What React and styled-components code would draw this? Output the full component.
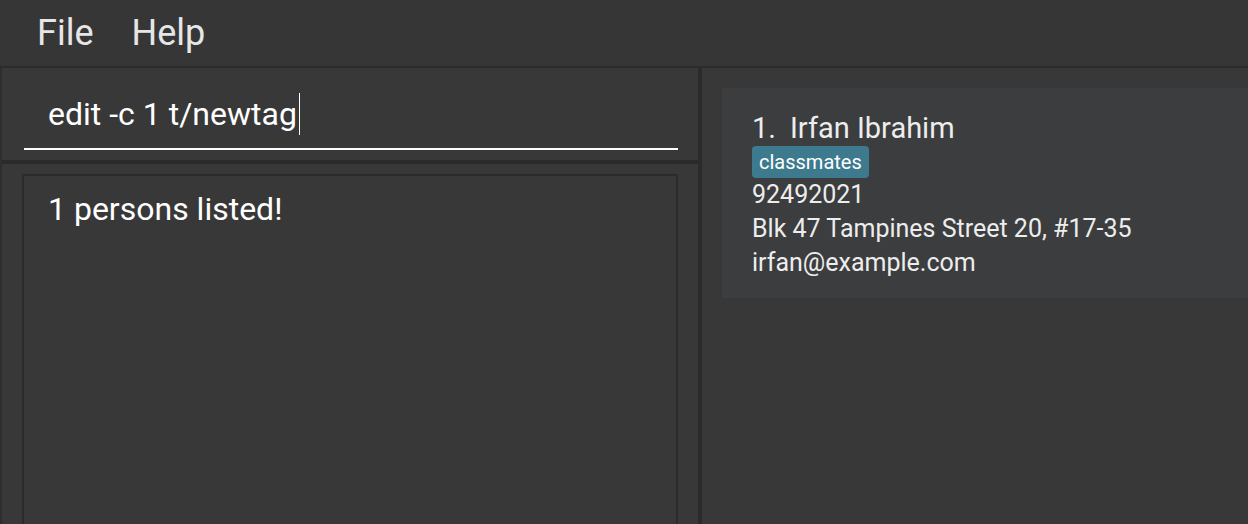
import React from "react";
import styled, { createGlobalStyle } from "styled-components";

const GlobalStyle = createGlobalStyle`
  html, body {
    margin: 0;
    padding: 0;
    height: 100%;
    background-color: #383838;
  }
  #root {
    height: 100%;
  }
  * {
    box-sizing: border-box;
  }
`;

const Window = styled.div`
  width: 100%;
  height: 524px;
  display: flex;
  flex-direction: column;
  font-family: Roboto, "Liberation Sans", sans-serif;
  color: #ffffff;
  overflow: hidden;
`;

const MenuBar = styled.div`
  height: 68px;
  display: flex;
  flex-direction: row;
  align-items: center;
  padding: 0 0 0 37px;
  gap: 38px;
  background-color: #363636;
  border-bottom: 2px solid #2b2b2b;
`;

const MenuItem = styled.div`
  font-size: 36px;
  color: #e6e6e6;
`;

const Body = styled.div`
  flex: 1;
  display: flex;
  flex-direction: row;
  min-height: 0;
`;

const LeftPane = styled.div`
  width: 702px;
  display: flex;
  flex-direction: column;
  border-left: 2px solid #2e2e2e;
  border-right: 4px solid #2b2b2b;
`;

const CommandPane = styled.div`
  height: 96px;
  padding: 24px 20px 0 22px;
  border-bottom: 4px solid #2b2b2b;
`;

const CommandInput = styled.div`
  height: 58px;
  padding: 0 0 12px 24px;
  border-bottom: 2px solid #ffffff;
  font-size: 32px;
  line-height: 44px;
  color: #ffffff;
  white-space: pre;
`;

const Caret = styled.span`
  display: inline-block;
  width: 1px;
  height: 42px;
  margin-left: 2px;
  vertical-align: -10px;
  background-color: #ffffff;
`;

const ResultPane = styled.div`
  flex: 1;
  padding: 10px 20px 0 20px;
  display: flex;
`;

const ResultBox = styled.div`
  flex: 1;
  border: 2px solid #2b2b2b;
  border-bottom: none;
  padding: 11px 24px 0 24px;
  font-size: 32px;
  line-height: 44px;
  color: #ffffff;
`;

const RightPane = styled.div`
  flex: 1;
  padding: 20px 0 0 20px;
`;

const PersonCard = styled.div`
  background-color: #3c3d3f;
  padding: 22px 0 18px 30px;
  display: flex;
  flex-direction: column;
  align-items: flex-start;
`;

const NameRow = styled.div`
  display: flex;
  gap: 14px;
  font-size: 29px;
  line-height: 36px;
  color: #ededed;
`;

const Tag = styled.span`
  height: 32px;
  padding: 0 7px;
  border-radius: 4px;
  background-color: #3e7a8e;
  font-size: 20px;
  line-height: 32px;
  color: #ffffff;
`;

const Detail = styled.div`
  font-size: 25px;
  line-height: 34px;
  color: #ededed;
`;

export default function App() {
  return (
    <>
      <GlobalStyle />
      <Window>
        <MenuBar>
          <MenuItem>File</MenuItem>
          <MenuItem>Help</MenuItem>
        </MenuBar>
        <Body>
          <LeftPane>
            <CommandPane>
              <CommandInput>
                edit -c 1 t/newtag
                <Caret />
              </CommandInput>
            </CommandPane>
            <ResultPane>
              <ResultBox>1 persons listed!</ResultBox>
            </ResultPane>
          </LeftPane>
          <RightPane>
            <PersonCard>
              <NameRow>
                <span>1.</span>
                <span>Irfan Ibrahim</span>
              </NameRow>
              <Tag>classmates</Tag>
              <Detail>92492021</Detail>
              <Detail>Blk 47 Tampines Street 20, #17-35</Detail>
              <Detail>irfan@example.com</Detail>
            </PersonCard>
          </RightPane>
        </Body>
      </Window>
    </>
  );
}
